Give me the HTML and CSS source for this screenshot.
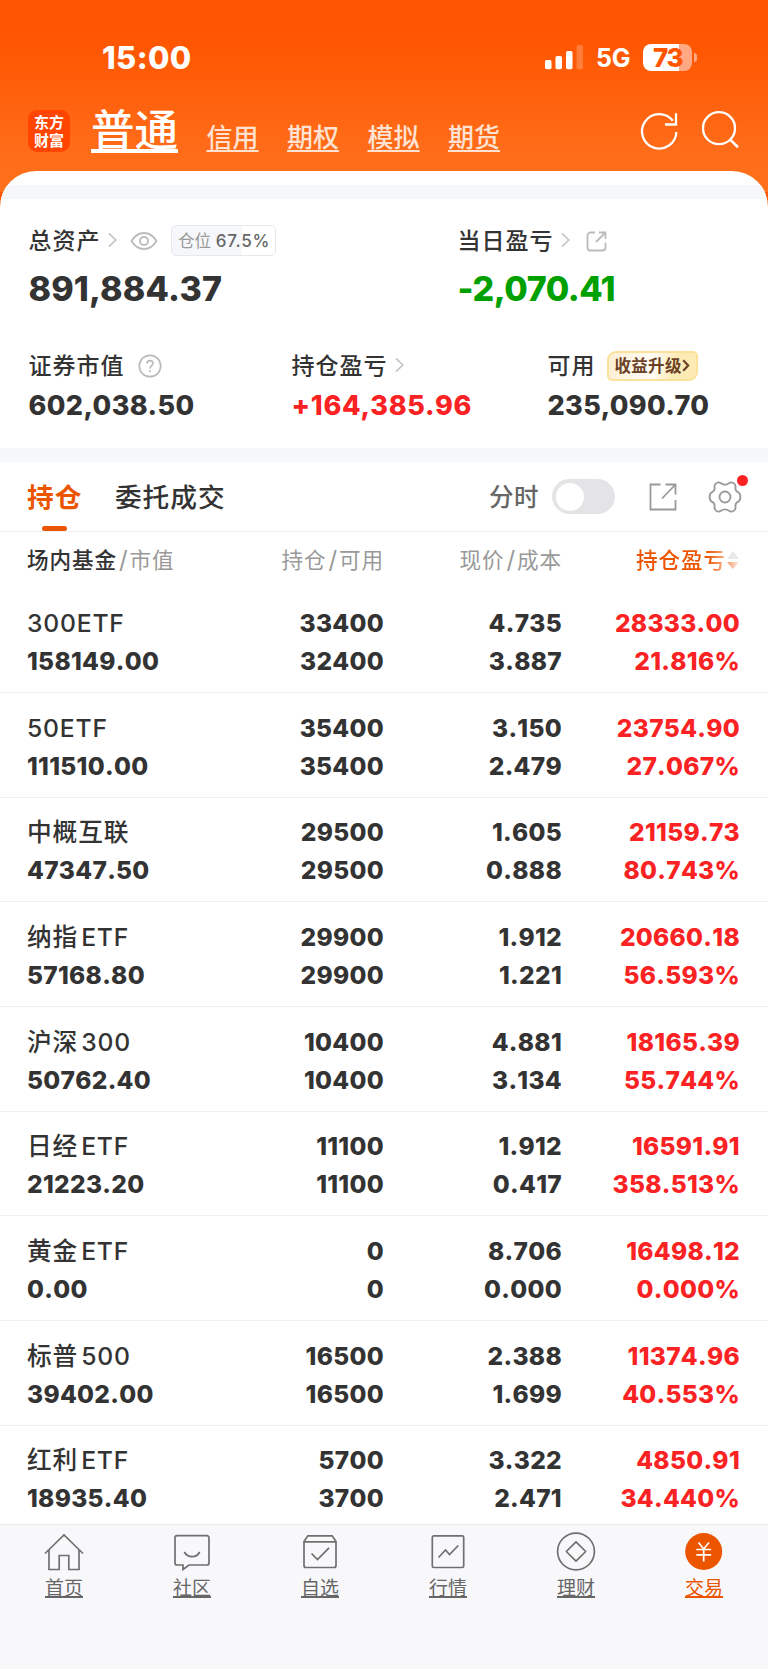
FILE: index.html
```html
<!DOCTYPE html>
<html lang="zh-CN">
<head>
<meta charset="utf-8">
<title>交易</title>
<link rel="stylesheet" href="styles.css">
</head>
<body>
<div class="screen">
  <header class="hero">
    <div class="status">
      <span class="clock">15:00</span>
      <div class="status-right">
        <svg class="signal" width="38" height="24" viewBox="0 0 38 24" fill="#fff"><rect x="0" y="15" width="6.5" height="9.3" rx="1.7"/><rect x="10.5" y="11" width="6.5" height="13.3" rx="1.7"/><rect x="21" y="6" width="6.5" height="18.3" rx="1.7"/><rect x="31.5" y="0" width="6.5" height="24.3" rx="1.7" opacity=".22"/></svg>
        <span class="net">5G</span>
        <span class="battery">73</span><span class="nub"></span>
      </div>
    </div>
    <nav class="accounts">
      <span class="logo"><span>东方</span><span>财富</span></span>
      <a class="acct on">普通</a>
      <a class="acct">信用</a>
      <a class="acct">期权</a>
      <a class="acct">模拟</a>
      <a class="acct">期货</a>
      <svg class="tools" width="104" height="44" viewBox="0 0 104 44" fill="none" stroke="#fff" stroke-width="2.3"><path d="M38.4 23a17.2 17.2 0 1 1-3.6-11.2"/><path d="M38 4.2v11.3H27"/><circle cx="81" cy="19.2" r="16"/><path d="M92.2 30.6l7.8 7.6" stroke-width="2.6"/></svg>
    </nav>
  </header>

  <main class="sheet">
    <section class="summary">
      <div class="totals">
        <div class="cell total">
          <div class="label"><span>总资产</span>
            <svg class="chev" width="9" height="16" viewBox="0 0 9 16"><path d="M1 1.3l6.8 6.7L1 14.7"/></svg>
            <svg class="eye" width="28" height="20" viewBox="0 0 28 20" fill="none" stroke="#bbb" stroke-width="1.8"><path d="M1.5 10C4.5 5 9 2 14 2s9.500 3 12.500 8c-3 5-7.500 8-12.500 8S4.500 15 1.500 10z"/><circle cx="14" cy="10" r="4"/></svg>
            <span class="position">仓位 <b>67.5%</b></span>
          </div>
          <div class="big">891,884.37</div>
        </div>
        <div class="cell">
          <div class="label"><span>当日盈亏</span>
            <svg class="chev" width="9" height="16" viewBox="0 0 9 16"><path d="M1 1.3l6.8 6.7L1 14.7"/></svg>
            <svg class="share" width="21" height="21" viewBox="0 0 21 21" fill="none" stroke="#bbb" stroke-width="1.8"><path d="M9 1.500H4.500a3 3 0 0 0-3 3v12a3 3 0 0 0 3 3h12a3 3 0 0 0 3-3V11.500M10 11L19 2M13 1.500h6.500V8"/></svg>
          </div>
          <div class="big down">-2,070.41</div>
        </div>
      </div>
      <div class="parts">
        <div class="cell">
          <div class="label"><span>证券市值</span><svg class="help" width="24" height="24" viewBox="0 0 24 24" fill="none" stroke="#bbb" stroke-width="1.7"><circle cx="12" cy="12" r="10.700"/><path d="M9 9.600C9 5.600 15 5.600 15 9.300c0 2.300-3 2.500-3 5.200M12 16.300v2"/></svg></div>
          <div class="mid">602,038.50</div>
        </div>
        <div class="cell">
          <div class="label"><span>持仓盈亏</span><svg class="chev" width="9" height="16" viewBox="0 0 9 16"><path d="M1 1.3l6.8 6.7L1 14.7"/></svg></div>
          <div class="mid up">+164,385.96</div>
        </div>
        <div class="cell">
          <div class="label"><span>可用</span><span class="boost">收益升级<svg width="8" height="13" viewBox="0 0 8 13" fill="none" stroke="#6b4226" stroke-width="2.200"><path d="M1.200 1.200l5 5.300-5 5.300"/></svg></span></div>
          <div class="mid">235,090.70</div>
        </div>
      </div>
    </section>

    <div class="tabs">
      <span class="tab on">持仓</span>
      <span class="tab">委托成交</span>
      <span class="mode">分时</span>
      <span class="switch"></span>
      <svg class="export" width="28" height="28" viewBox="0 0 28 28" fill="none" stroke="#999" stroke-width="1.800"><path d="M11.500 1.500h-10v25h25V17M13 15.500L26 2M16.500 1.500h10v10"/></svg>
      <span class="gear"><svg width="34" height="34" viewBox="0 0 34 34" fill="none" stroke="#999" stroke-width="1.800" stroke-linejoin="round"><path d="M13 3.200Q17 6.200 21 3.200Q23.500 1.500 26 3.400Q28 5 27.400 8Q27.300 11 30.300 12.300Q32.400 13.500 32.400 17Q32.400 20.500 30.300 21.700Q27.300 23 27.400 26Q28 29 26 30.600Q23.500 32.500 21 30.800Q17 27.800 13 30.800Q10.500 32.500 8 30.600Q6 29 6.600 26Q6.700 23 3.700 21.700Q1.600 20.500 1.600 17Q1.600 13.500 3.700 12.300Q6.700 11 6.600 8Q6 5 8 3.400Q10.500 1.500 13 3.200z"/><circle cx="17" cy="17" r="5.500"/></svg></span>
    </div>

    <div class="grid head">
      <span class="name"><em>场内基金</em><i>/</i>市值</span>
      <span>持仓<i>/</i>可用</span>
      <span>现价<i>/</i>成本</span>
      <span class="sorted"><em>持仓盈亏</em><svg width="12" height="18" viewBox="0 0 12 18"><defs><linearGradient id="fade"><stop offset="0" stop-color="#f49a66"/><stop offset="1" stop-color="#fdeee6"/></linearGradient></defs><path d="M6 0l6 8H0z" fill="#e9e9ec"/><path d="M6 18l6-7H0z" fill="url(#fade)"/></svg></span>
    </div>

    <div class="rows">
      <div class="grid row"><div class="name"><span><i>300ETF</i></span><b>158149.00</b></div><div><b>33400</b><b>32400</b></div><div><b>4.735</b><b>3.887</b></div><div class="up"><b>28333.00</b><b>21.816%</b></div></div>
      <div class="grid row"><div class="name"><span><i>50ETF</i></span><b>111510.00</b></div><div><b>35400</b><b>35400</b></div><div><b>3.150</b><b>2.479</b></div><div class="up"><b>23754.90</b><b>27.067%</b></div></div>
      <div class="grid row"><div class="name"><span>中概互联</span><b>47347.50</b></div><div><b>29500</b><b>29500</b></div><div><b>1.605</b><b>0.888</b></div><div class="up"><b>21159.73</b><b>80.743%</b></div></div>
      <div class="grid row"><div class="name"><span>纳指<i class="gap">ETF</i></span><b>57168.80</b></div><div><b>29900</b><b>29900</b></div><div><b>1.912</b><b>1.221</b></div><div class="up"><b>20660.18</b><b>56.593%</b></div></div>
      <div class="grid row"><div class="name"><span>沪深<i class="gap">300</i></span><b>50762.40</b></div><div><b>10400</b><b>10400</b></div><div><b>4.881</b><b>3.134</b></div><div class="up"><b>18165.39</b><b>55.744%</b></div></div>
      <div class="grid row"><div class="name"><span>日经<i class="gap">ETF</i></span><b>21223.20</b></div><div><b>11100</b><b>11100</b></div><div><b>1.912</b><b>0.417</b></div><div class="up"><b>16591.91</b><b>358.513%</b></div></div>
      <div class="grid row"><div class="name"><span>黄金<i class="gap">ETF</i></span><b>0.00</b></div><div><b>0</b><b>0</b></div><div><b>8.706</b><b>0.000</b></div><div class="up"><b>16498.12</b><b>0.000%</b></div></div>
      <div class="grid row"><div class="name"><span>标普<i class="gap">500</i></span><b>39402.00</b></div><div><b>16500</b><b>16500</b></div><div><b>2.388</b><b>1.699</b></div><div class="up"><b>11374.96</b><b>40.553%</b></div></div>
      <div class="grid row"><div class="name"><span>红利<i class="gap">ETF</i></span><b>18935.40</b></div><div><b>5700</b><b>3700</b></div><div><b>3.322</b><b>2.471</b></div><div class="up"><b>4850.91</b><b>34.440%</b></div></div>
    </div>
  </main>

  <nav class="dock">
    <a><svg width="40" height="40" viewBox="0 0 40 40"><path d="M1 20.500L20 2l19 18.500M5 17v19.500h10.200V22.500h9.600v14H35V17"/></svg>首页</a>
    <a><svg width="40" height="40" viewBox="0 0 40 40"><path d="M5 2.700h30a2 2 0 0 1 2 2V30a2 2 0 0 1-2 2H17l-6 4.500V32H5a2 2 0 0 1-2-2V4.700a2 2 0 0 1 2-2zM12.300 19c3.500 6.300 12 6.300 15.400 0"/></svg>社区</a>
    <a><svg width="40" height="40" viewBox="0 0 40 40"><path d="M4 8.500L7.800 2.800h24.400L36 8.500V32.500a2 2 0 0 1-2 2H6a2 2 0 0 1-2-2zM4 8.800h32M11.500 20.500l6 6L29 14.800"/></svg>自选</a>
    <a><svg width="40" height="40" viewBox="0 0 40 40"><rect x="4.300" y="2.800" width="31.400" height="31.700" rx="1.500"/><path d="M10.500 24.500L17.500 17l4 4.500 8.800-9"/></svg>行情</a>
    <a><svg width="40" height="40" viewBox="0 0 40 40"><circle cx="20" cy="18.500" r="18.400"/><path d="M20 8.800l9.700 9.700L20 28.200l-9.700-9.700z" stroke-linejoin="round"/></svg>理财</a>
    <a class="on"><svg width="40" height="40" viewBox="0 0 40 40"><circle cx="19.700" cy="18.500" r="18.500" fill="#eb5500" stroke="none"/><path d="M14.500 9.500l5.200 6.500L25 9.500M12.300 16.500h14.800M12.300 21.800h14.800M19.700 16v12.500" stroke="#fff"/></svg>交易</a>
  </nav>
</div>
</body>
</html>
```
FILE: styles.css
```css
* { box-sizing: border-box; }
body { margin: 0; background: #fff; font-family: Inter, "Noto Sans CJK SC", sans-serif; color: #333; }
i, em { font-style: normal; }
svg { display: block; flex: none; overflow: visible; }
.screen { width: 768px; height: 1669px; display: flex; flex-direction: column; overflow: hidden; background: linear-gradient(#ff5500 0, #ff5702 50px, #ff6c19 150px, #ff701c 192px, #ff5500 192px, #ff5500 230px, #fff 230px); }
.hero { height: 171px; flex: none; color: #fff; }
.status { height: 104px; padding: 10px 71px 0 102px; display: flex; justify-content: space-between; align-items: center; }
.clock { font-size: 31px; font-weight: 800; letter-spacing: .4px; }
.status-right { display: flex; align-items: center; }
.net { margin: 1px 0 0 13px; width: 47px; font-size: 25px; font-weight: 650; line-height: 28px; letter-spacing: -.2px; }
.battery { width: 49px; height: 27px; border-radius: 8px; background: linear-gradient(90deg, #fff 36px, #ffa983 36px); color: #ff5500; font-size: 26px; line-height: 27px; font-weight: 800; text-align: center; letter-spacing: -1.500px; }
.nub { width: 3px; height: 9px; margin-left: 2px; border-radius: 0 4px 4px 0; background: #ffa983; }
.accounts { height: 67px; padding: 0 28px; display: flex; align-items: flex-start; }
.logo { width: 42px; height: 42px; margin-top: 6px; border-radius: 9px; background: #ff4500; font: 700 15px/18px "Noto Sans CJK SC", sans-serif; display: flex; flex-direction: column; align-items: center; padding-top: 3px; }
.logo span { display: block; height: 18px; }
.acct { margin-left: 28.500px; margin-top: 14px; font-size: 26px; line-height: 40px; font-weight: 500; color: #ffe2d2; text-decoration: underline 2px; text-underline-offset: 3px; text-decoration-skip-ink: none; }
.acct.on { margin: -4px 0 0 21px; font-size: 43.500px; line-height: 60px; color: #fff; text-decoration-thickness: 4px; }
.tools { margin: 5px -1.500px 0 auto; }
.sheet { flex: 1; min-height: 0; overflow: hidden; background: #fff; border-radius: 36px 36px 0 0; padding-top: 13.500px; }
.summary { height: 277.500px; border-top: 14px solid #f5f7fa; border-bottom: 14px solid #f5f7fa; padding: 0 28px 0 28.500px; }
.label { display: flex; align-items: center; height: 36px; font-size: 23px; letter-spacing: 1px; white-space: nowrap; font-weight: 500; }
.label > span:first-child { margin-top: -3px; }
.totals { display: grid; grid-template-columns: 429px 1fr; padding-top: 24px; }
.chev { margin: -1px 0 0 7px; fill: none; stroke: #c4c4c4; stroke-width: 1.700; }
.eye { margin-left: 13px; }
.position { margin-left: 13.500px; width: 105px; height: 31px; padding-left: 6px; border: 1px solid #e6e8ec; border-radius: 5px; background: linear-gradient(90deg, #f6f7fa 70px, #fff 70px); font-size: 16.500px; line-height: 30px; letter-spacing: 0; color: #999; font-weight: 400; }
.position b { font-size: 17px; font-weight: 500; color: #666; letter-spacing: .8px; }
.share { margin: 1px 0 0 16px; }
.big { margin-top: 9px; font-size: 34px; line-height: 42px; font-weight: 800; letter-spacing: .15px; }
.big.down { letter-spacing: -.45px; }
.parts { display: grid; grid-template-columns: 263px 256px 1fr; padding-top: 38px; }
.help { margin-left: 13.500px; }
.boost { display: flex; align-items: center; width: 91px; height: 30px; margin-left: 11px; padding: 0 0 2px 6px; border: 2px solid #fbe29a; border-radius: 9px 5px; background: linear-gradient(100deg, #fdeed2, #fffdf8 50%, #fdebb5 75%); color: #6b4226; font-size: 16.500px; font-weight: 700; letter-spacing: .3px; }
.boost svg { margin-top: 2px; }
.mid { margin-top: 5px; font-size: 27px; line-height: 34px; font-weight: 800; letter-spacing: .4px; }
.mid.up { letter-spacing: .75px; }
.up { color: #fa2222; }
.down { color: #00a000; }
.tabs { height: 69.500px; padding: 0 26px 0 27px; border-bottom: 1px solid #f0f1f3; display: flex; align-items: center; }
.tab { position: relative; margin-top: -1px; font-size: 26.700px; letter-spacing: 1px; font-weight: 500; }
.tab.on { font-weight: 700; color: #eb5500; margin-right: 32.500px; }
.tab.on::after { content: ""; position: absolute; left: 15px; bottom: -16px; width: 25px; height: 5px; border-radius: 3px; background: #eb5500; }
.mode { margin: -1px 0 0 auto; font-size: 24.500px; letter-spacing: .5px; font-weight: 500; color: #666; }
.switch { width: 63px; height: 35px; margin: 1px 34px 0 13px; border-radius: 18px; background: #e4e4e7; padding: 3.500px; }
.switch::before { content: ""; display: block; width: 28px; height: 28px; border-radius: 50%; background: #fff; }
.export { margin-top: 1px; }
.gear { position: relative; margin: 2px 0 0 31px; }
.gear::after { content: ""; position: absolute; right: -6px; top: -5px; width: 11px; height: 11px; border-radius: 50%; background: #fa2222; }
.grid { display: grid; grid-template-columns: 201px 156px 178px 178px; padding-left: 27px; text-align: right; }
.grid .name { text-align: left; }
.head { height: 57px; align-items: center; padding-bottom: 3px; font-size: 21.600px; letter-spacing: .9px; color: #999; white-space: nowrap; }
.head em { color: #333; font-weight: 500; }
.head i { margin: 0 1px 0 2px; font-size: 24px; }
.head .sorted { display: flex; align-items: center; justify-content: flex-end; }
.head .sorted em { background: linear-gradient(90deg, #eb5500 72px, #fbc5a8 92px); -webkit-background-clip: text; background-clip: text; color: transparent; }
.sorted svg { margin: 3px 1px 0 1px; }
.row { height: 104.670px; padding-top: 15.500px; border-bottom: 1px solid #f0f1f3; font-size: 24.500px; line-height: 38px; letter-spacing: .3px; font-kerning: none; }
.row b, .row .name > span { display: block; height: 38px; white-space: nowrap; }
.row b { font-weight: 800; }
.row .name > span { font-size: 24.700px; letter-spacing: .9px; font-weight: 500; }
.row .name i { font-weight: 450; letter-spacing: .8px; }
.row .name .gap { margin-left: 3px; }
.dock { height: 145.500px; flex: none; border-top: 1.500px solid #e9eaee; background: #f8f8fb; display: grid; grid-template-columns: repeat(6, 1fr); }
.dock a { display: flex; flex-direction: column; align-items: center; padding-top: 8px; font-size: 19px; line-height: 28px; font-weight: 400; color: #666; text-decoration: underline 1.500px; text-underline-offset: 1px; text-decoration-skip-ink: none; }
.dock svg { margin-bottom: 2px; fill: none; stroke: #707070; stroke-width: 1.700; }
.dock .on { color: #eb5500; }
```
